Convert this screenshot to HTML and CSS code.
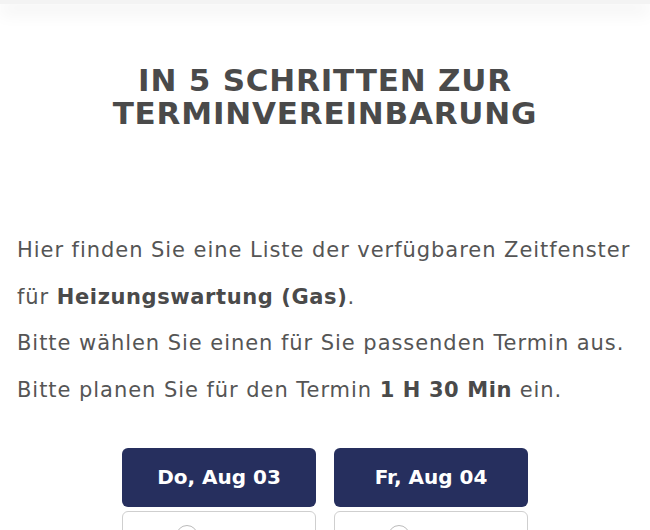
FILE: index.html
```html
<!DOCTYPE html>
<html lang="de">
<head>
<meta charset="utf-8">
<title>Terminvereinbarung</title>
<link rel="stylesheet" href="styles.css">
</head>
<body>
<header class="topbar"></header>
<main class="content">
  <h1 class="title">IN 5 SCHRITTEN ZUR<br>TERMINVEREINBARUNG</h1>
  <div class="intro">
    <p>Hier finden Sie eine Liste der verfügbaren Zeitfenster<br>für <strong>Heizungswartung (Gas)</strong>.</p>
    <p>Bitte wählen Sie einen für Sie passenden Termin aus.</p>
    <p>Bitte planen Sie für den Termin <strong>1 H 30 Min</strong> ein.</p>
  </div>
  <div class="days">
    <div class="day">
      <div class="day-head">Do, Aug 03</div>
      <div class="slot"><span class="radio"></span></div>
    </div>
    <div class="day">
      <div class="day-head">Fr, Aug 04</div>
      <div class="slot"><span class="radio"></span></div>
    </div>
  </div>
</main>
</body>
</html>
```

FILE: styles.css
```css
html, body {
  margin: 0;
  padding: 0;
  background: #fff;
}
body {
  font-family: "DejaVu Sans", "Inter", sans-serif;
  color: #555;
  overflow: hidden;
}
.topbar {
  height: 4px;
  background: #f3f3f3;
  box-shadow: 0 6px 18px rgba(0, 0, 0, 0.16);
  position: relative;
}
.content {
  padding: 60px 17px 0;
}
.title {
  margin: 0;
  text-align: center;
  font-size: 31px;
  line-height: 33px;
  font-weight: 700;
  letter-spacing: 0.8px;
  color: #4a4a4a;
}
.intro {
  margin-top: 97px;
  font-size: 21px;
  line-height: 46.7px;
  font-weight: 400;
  letter-spacing: 0.95px;
}
.intro p {
  margin: 0;
}
.intro strong {
  font-weight: 700;
  color: #4a4a4a;
  letter-spacing: 0.6px;
}
.days {
  margin-top: 34px;
  display: flex;
  justify-content: center;
  gap: 18px;
}
.day {
  width: 194px;
  display: flex;
  flex-direction: column;
  gap: 4px;
}
.day-head {
  height: 59px;
  border-radius: 6px;
  background: #262f5e;
  color: #fff;
  font-weight: 700;
  font-size: 20px;
  display: flex;
  align-items: center;
  justify-content: center;
}
.slot {
  height: 50px;
  border: 1px solid #cfcfcf;
  border-radius: 6px;
  display: flex;
  align-items: flex-start;
  padding: 13px 0 0 53px;
}
.radio {
  width: 22px;
  height: 22px;
  border: 1px solid #bbb;
  border-radius: 50%;
  box-sizing: border-box;
}
```
